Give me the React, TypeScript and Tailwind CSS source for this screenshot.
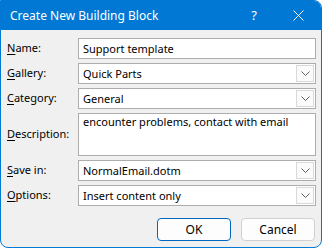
const FONT = { fontFamily: '"Noto Sans", "Open Sans", sans-serif' };

function Label({ k, rest }: { k: string; rest: string }) {
  return (
    <div className="w-[71px] shrink-0 text-[11px] text-black">
      <span className="underline underline-offset-2">{k}</span>
      {rest}
    </div>
  );
}

function Chevron() {
  return (
    <svg width="9" height="5" viewBox="0 0 9 5" fill="none">
      <path d="M0.5 0.5 L4.5 4.5 L8.5 0.5" stroke="#5f5f5f" strokeWidth="1" />
    </svg>
  );
}

function Field({ value, select }: { value: string; select?: boolean }) {
  return (
    <div className="flex h-[21px] flex-1 items-center border border-[#adadad] bg-white">
      <span className="flex-1 pl-[4px] text-[11px] leading-none text-black">{value}</span>
      {select && (
        <div className="mr-px flex h-[17px] w-[18px] items-center justify-center border border-[#d9d9d9] bg-[#fbfbfb]">
          <Chevron />
        </div>
      )}
    </div>
  );
}

export default function App() {
  return (
    <div className="h-[248px] w-[322px] bg-white" style={FONT}>
      <div className="flex h-[248px] w-[322px] flex-col overflow-hidden rounded-tr-[8px] rounded-b-[8px] border border-[#0078d4] bg-[#f0f0f0]">
        <div className="flex h-[29px] shrink-0 items-center bg-[#0078d4] pl-[9px] text-white">
          <span className="flex-1 text-[12px]">Create New Building Block</span>
          <span className="mr-[36px] text-[13px]">?</span>
          <svg className="mr-[17px]" width="11" height="11" viewBox="0 0 11 11">
            <path d="M0.5 0.5 L10.5 10.5 M10.5 0.5 L0.5 10.5" stroke="white" strokeWidth="1" />
          </svg>
        </div>
        <div className="flex flex-col gap-[4px] pl-[6px] pr-[5px] pt-[8px]">
          <div className="flex items-center">
            <Label k="N" rest="ame:" />
            <Field value="Support template" />
          </div>
          <div className="flex items-center">
            <Label k="G" rest="allery:" />
            <Field value="Quick Parts" select />
          </div>
          <div className="flex items-center">
            <Label k="C" rest="ategory:" />
            <Field value="General" select />
          </div>
          <div className="flex items-center">
            <Label k="D" rest="escription:" />
            <div className="h-[43px] flex-1 border border-[#adadad] bg-white pl-[4px] text-[11px] leading-[15px] text-black">
              encounter problems, contact with email
            </div>
          </div>
          <div className="flex items-center">
            <Label k="S" rest="ave in:" />
            <Field value="NormalEmail.dotm" select />
          </div>
          <div className="flex items-center">
            <Label k="O" rest="ptions:" />
            <Field value="Insert content only" select />
          </div>
          <div className="mt-[8px] flex justify-end gap-[10px] pr-[1px]">
            <button className="h-[23px] w-[74px] rounded-[4px] border border-[#0067c0] bg-[#fdfdfd] text-[12px] text-black">
              OK
            </button>
            <button className="h-[23px] w-[74px] rounded-[4px] border border-[#d0d0d0] bg-[#fdfdfd] text-[12px] text-black">
              Cancel
            </button>
          </div>
        </div>
      </div>
    </div>
  );
}
